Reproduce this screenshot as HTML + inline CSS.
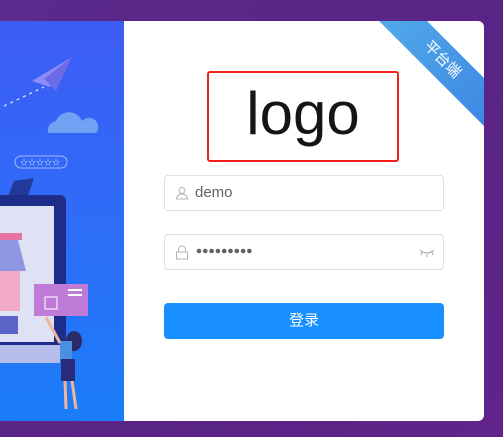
<!DOCTYPE html>
<html><head><meta charset="utf-8"><style>
*{margin:0;padding:0;box-sizing:border-box}
body{width:503px;height:437px;overflow:hidden;background:linear-gradient(135deg,#5b2a8c,#5a2486 60%,#60248a);font-family:"Liberation Sans","Noto Sans CJK SC",sans-serif;position:relative}
.card{position:absolute;left:0;top:21px;width:484px;height:400px;background:#fff;border-radius:0 6px 6px 0;overflow:hidden}
.left{position:absolute;left:0;top:0;width:124px;height:400px;background:linear-gradient(180deg,#3d5cf5 0%,#2f6cf8 50%,#1a7df7 100%)}
.ribbon{position:absolute;left:342px;top:22px;width:200px;height:34px;background:linear-gradient(90deg,#55b0ea,#3a82e3);transform:rotate(45deg);transform-origin:50% 50%;color:#fff;font-size:15px;line-height:34px;text-align:center}
.logo{position:absolute;left:207px;top:50px;width:192px;height:91px;border:2px solid #f0201a;border-radius:3px;text-align:center;font-size:60px;line-height:82px;color:#151515}
.inp{position:absolute;left:164px;width:280px;height:36px;border:1px solid #dcdfe6;border-radius:4px;font-size:15px;color:#606266}
.btn{position:absolute;left:164px;top:282px;width:280px;height:36px;background:#1890ff;border-radius:4px;color:#fff;text-align:center;line-height:36px;font-size:15px}
</style></head><body>
<div class="card">
 <div class="left">
  <svg width="124" height="400" viewBox="0 0 124 400">
   <polygon points="32,60 72,36 50,66" fill="#8e8cf8"/><polygon points="44,58 72,36 56,70" fill="#6d6ae8"/>
   <path d="M4,85 L44,66" stroke="#c8d4ff" stroke-width="1.5" stroke-dasharray="3,4"/>
   <path d="M48,112 a10,10 0 0 1 8,-12 a14,14 0 0 1 26,0 a8,8 0 0 1 14,12 z" fill="#6fa2f5"/>
   <rect x="15" y="135" width="52" height="12" rx="6" fill="none" stroke="#9fb8ff"/>
   <text x="20" y="144" font-size="8" fill="#cfdcff">☆☆☆☆☆</text>
   <polygon points="14,160 34,157 28,175 8,175" fill="#233a9a"/>
   <rect x="-10" y="174" width="76" height="160" rx="6" fill="#1e2c8a"/>
   <rect x="-10" y="185" width="64" height="136" fill="#dfe2f4"/>
   <rect x="-10" y="324" width="70" height="18" fill="#b7bdeb"/>
   <rect x="-10" y="212" width="32" height="7" fill="#e573a3"/>
   <polygon points="-10,219 18,219 26,250 -10,250" fill="#8f97e4"/>
   <rect x="-10" y="250" width="30" height="40" fill="#f0a9c6"/>
   <rect x="-10" y="295" width="28" height="18" fill="#5d64c8"/>
   <rect x="34" y="263" width="54" height="32" fill="#c07bd9"/>
   <rect x="45" y="276" width="12" height="12" fill="none" stroke="#fff"/>
   <rect x="68" y="268" width="14" height="2" fill="#fff"/><rect x="68" y="273" width="14" height="2" fill="#fff"/>
   <ellipse cx="74" cy="320" rx="8" ry="10" fill="#2a2a6a"/>
   <rect x="60" y="320" width="12" height="18" fill="#4c8fe0"/>
   <rect x="61" y="338" width="14" height="22" fill="#2a2a7a"/>
   <path d="M65,360 L66,388 M72,360 L76,388" stroke="#f1b59a" stroke-width="3"/>
   <path d="M46,296 L60,322" stroke="#f1b59a" stroke-width="3"/>
  </svg>
 </div>
 <div class="ribbon">平台端</div>
 <div class="logo">logo</div>
 <div class="inp" style="top:154px">
  <svg style="position:absolute;left:10px;top:10px" width="14" height="14" viewBox="0 0 14 14"><circle cx="7" cy="4.5" r="3" fill="none" stroke="#b0b4bc"/><path d="M1.5,13 a5.5,5 0 0 1 11,0 z" fill="none" stroke="#b0b4bc"/></svg>
  <span style="position:absolute;left:30px;top:8px">demo</span>
 </div>
 <div class="inp" style="top:213px">
  <svg style="position:absolute;left:10px;top:10px" width="14" height="15" viewBox="0 0 14 15"><path d="M3.5,7 V4.5 a3.5,3.5 0 0 1 7,0 V7" fill="none" stroke="#b0b4bc"/><rect x="1.5" y="7" width="11" height="7" fill="none" stroke="#b0b4bc"/></svg>
  <svg style="position:absolute;left:31px;top:13px" width="56" height="6" viewBox="0 0 56 6"><g fill="#606266"><circle cx="3" cy="3" r="2.3"/><circle cx="9.3" cy="3" r="2.3"/><circle cx="15.6" cy="3" r="2.3"/><circle cx="21.9" cy="3" r="2.3"/><circle cx="28.2" cy="3" r="2.3"/><circle cx="34.5" cy="3" r="2.3"/><circle cx="40.8" cy="3" r="2.3"/><circle cx="47.1" cy="3" r="2.3"/><circle cx="53.4" cy="3" r="2.3"/></g></svg>
  <svg style="position:absolute;right:8px;top:13px" width="16" height="10" viewBox="0 0 16 10"><path d="M1,2 Q8,8 15,2 M3,4 L2,7 M8,6 L8,9 M13,4 L14,7" fill="none" stroke="#a0a4ac"/></svg>
 </div>
 <div class="btn">登录</div>
</div>
</body></html>
